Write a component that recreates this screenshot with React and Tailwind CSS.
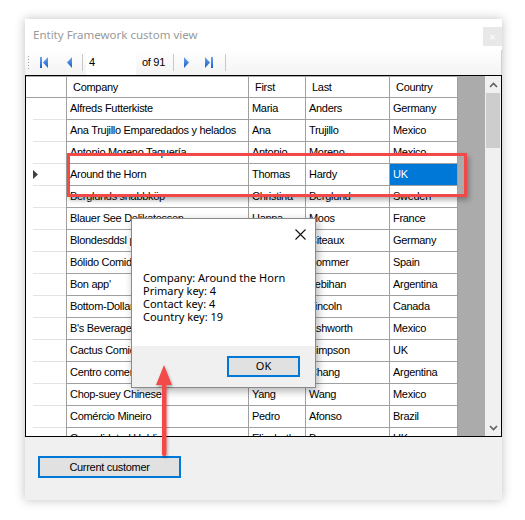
import React from "react";

const rows = [
  ["Alfreds Futterkiste", "Maria", "Anders", "Germany"],
  ["Ana Trujillo Emparedados y helados", "Ana", "Trujillo", "Mexico"],
  ["Antonio Moreno Taquería", "Antonio", "Moreno", "Mexico"],
  ["Around the Horn", "Thomas", "Hardy", "UK"],
  ["Berglunds snabbköp", "Christina", "Berglund", "Sweden"],
  ["Blauer See Delikatessen", "Hanna", "Moos", "France"],
  ["Blondesddsl père et fils", "Frédérique", "Citeaux", "Germany"],
  ["Bólido Comidas preparadas", "Martín", "Sommer", "Spain"],
  ["Bon app'", "Laurence", "Lebihan", "Argentina"],
  ["Bottom-Dollar Markets", "Elizabeth", "Lincoln", "Canada"],
  ["B's Beverages", "Victoria", "Ashworth", "Mexico"],
  ["Cactus Comidas para llevar", "Patricio", "Simpson", "UK"],
  ["Centro comercial Moctezuma", "Francisco", "Chang", "Argentina"],
  ["Chop-suey Chinese", "Yang", "Wang", "Mexico"],
  ["Comércio Mineiro", "Pedro", "Afonso", "Brazil"],
  ["Consolidated Holdings", "Elizabeth", "Brown", "UK"],
];

const current = 3;

// column widths incl. right border
const cols = ["w-[182px]", "w-[57px]", "w-[84px]", "w-[68px]"];

function NavIcon({ dir, bar }) {
  // dir: "l" or "r"
  const id = "g" + dir + (bar ? "b" : "");
  return (
    <svg width="9" height="11" viewBox="0 0 9 11">
      <defs>
        <linearGradient id={id} x1="0" y1="0" x2="0" y2="1">
          <stop offset="0" stopColor="#6aa6ee" />
          <stop offset="1" stopColor="#1a5fc8" />
        </linearGradient>
      </defs>
      {dir === "l" ? (
        <>
          {bar && <rect x="0" y="0" width="2" height="11" fill={`url(#${id})`} />}
          <polygon points={bar ? "8,0 3,5.5 8,11" : "7,0 2,5.5 7,11"} fill={`url(#${id})`} />
        </>
      ) : (
        <>
          <polygon points={bar ? "1,0 6,5.5 1,11" : "2,0 7,5.5 2,11"} fill={`url(#${id})`} />
          {bar && <rect x="7" y="0" width="2" height="11" fill={`url(#${id})`} />}
        </>
      )}
    </svg>
  );
}

function Sep() {
  return <div className="w-px h-[17px] bg-[#c8c8c8]" />;
}

export default function App() {
  const sans = { fontFamily: '"Liberation Sans", Arial, sans-serif' };
  const ui = { fontFamily: '"Noto Sans", "Open Sans", sans-serif' };

  return (
    <div className="relative w-[525px] h-[520px] bg-white overflow-hidden">
      {/* window */}
      <div className="ml-[25px] mt-[19px] w-[477px] h-[481px] flex flex-col bg-[#f0f0f0] shadow-[0_0_10px_rgba(0,0,0,0.25)]">
        {/* title bar */}
        <div className="h-[31px] bg-white flex items-start justify-between">
          <div className="pl-[8px] pt-[8px] text-[11.5px] leading-[16px] text-[#9a9a9a]" style={ui}>
            Entity Framework custom view
          </div>
          <div className="mt-[8px] w-[19px] h-[19px] bg-[#e8e8e8] flex items-center justify-center text-white text-[11px] leading-none" style={ui}>
            ×
          </div>
        </div>

        {/* toolbar */}
        <div className="h-[25px] flex items-center bg-gradient-to-b from-white to-[#f3f3f3] border-r border-[#d0d0d0] text-[11px] tracking-[-0.3px] text-black" style={sans}>
          <div className="ml-[2px] w-[3px] h-[15px] bg-[radial-gradient(circle,#a0a0a0_0.8px,transparent_1px)] bg-[length:3px_3px]" />
          <div className="ml-[10px]"><NavIcon dir="l" bar /></div>
          <div className="ml-[16px]"><NavIcon dir="l" /></div>
          <div className="ml-[8px]"><Sep /></div>
          <div className="ml-[3px] w-[50px] h-[24px] bg-white flex items-center pl-[3px]">4</div>
          <div className="ml-[6px]">of 91</div>
          <div className="ml-[8px]"><Sep /></div>
          <div className="ml-[8px]"><NavIcon dir="r" /></div>
          <div className="ml-[13px]"><NavIcon dir="r" bar /></div>
          <div className="ml-[12px]"><Sep /></div>
        </div>

        {/* grid */}
        <div className="h-[362px] border border-black flex overflow-hidden text-[11px] tracking-[-0.3px] text-black" style={sans}>
          <div className="w-[459px] bg-[#ababab] overflow-hidden flex flex-col pt-px">
            {/* header */}
            <div className="flex h-[21px] shrink-0">
              <div className="w-[41px] bg-white border-r border-b border-[#a0a0a0]" />
              {["Company", "First", "Last", "Country"].map((h, i) => (
                <div key={h} className={`${cols[i]} bg-white border-r border-b border-[#a0a0a0] pl-[6px] flex items-center`}>
                  {h}
                </div>
              ))}
            </div>
            {rows.map((r, ri) => (
              <div key={ri} className="flex h-[22px] shrink-0">
                <div className="w-[41px] bg-white border-r border-[#a0a0a0] flex items-center pl-[7px]">
                  <div className="w-full h-full border-b border-[#e3e3e3] flex items-center">
                    {ri === current && (
                      <svg width="5" height="9" viewBox="0 0 5 9">
                        <polygon points="0,0 5,4.5 0,9" fill="#404040" />
                      </svg>
                    )}
                  </div>
                </div>
                {r.map((c, ci) => {
                  const sel = ri === current && ci === 3;
                  return (
                    <div
                      key={ci}
                      className={`${cols[ci]} ${sel ? "bg-[#0078d7] text-white" : "bg-white"} border-r border-b border-[#a0a0a0] pl-[3px] flex items-center whitespace-nowrap overflow-hidden`}
                    >
                      {c}
                    </div>
                  );
                })}
              </div>
            ))}
          </div>
          {/* scrollbar */}
          <div className="w-[16px] bg-[#f0f0f0] flex flex-col">
            <div className="h-[17px] flex items-center justify-center">
              <svg width="9" height="6" viewBox="0 0 9 6">
                <polyline points="1,5 4.5,1.5 8,5" fill="none" stroke="#606060" strokeWidth="1.6" />
              </svg>
            </div>
            <div className="mx-px h-[55px] bg-[#cdcdcd]" />
            <div className="flex-1" />
            <div className="h-[17px] flex items-center justify-center">
              <svg width="9" height="6" viewBox="0 0 9 6">
                <polyline points="1,1 4.5,4.5 8,1" fill="none" stroke="#606060" strokeWidth="1.6" />
              </svg>
            </div>
          </div>
        </div>

        {/* bottom area */}
        <div className="flex-1 pl-[13px] pt-[19px]">
          <div
            className="w-[143px] h-[22px] border-2 border-[#0078d7] bg-[#e1e1e1] flex items-center justify-center text-[11px] tracking-[-0.3px] text-black"
            style={sans}
          >
            Current customer
          </div>
        </div>
      </div>

      {/* red highlight */}
      <div className="absolute left-[67px] top-[153px] w-[400px] h-[44px] border-[3px] border-[#f24848] shadow-[2px_3px_5px_rgba(0,0,0,0.3)]" />

      {/* message box */}
      <div className="absolute left-[131px] top-[218px] w-[185px] h-[170px] bg-white border border-[#8a8a8a] shadow-[2px_3px_8px_rgba(0,0,0,0.3)] flex flex-col" style={ui}>
        <div className="h-[127px] flex flex-col">
          <div className="flex justify-end pr-[9px] pt-[10px]">
            <svg width="11" height="11" viewBox="0 0 11 11">
              <path d="M0.5 0.5 L10.5 10.5 M10.5 0.5 L0.5 10.5" stroke="#111" strokeWidth="1.1" />
            </svg>
          </div>
          <div className="pl-[11px] pt-[31px] text-[11px] leading-[13px] text-black">
            <div>Company: Around the Horn</div>
            <div>Primary key: 4</div>
            <div>Contact key: 4</div>
            <div>Country key: 19</div>
          </div>
        </div>
        <div className="flex-1 bg-[#f0f0f0] flex justify-end items-start pt-[10px] pr-[15px]">
          <div className="w-[73px] h-[21px] border-2 border-[#0078d7] bg-[#e1e1e1] flex items-center justify-center text-[11px] text-black">
            OK
          </div>
        </div>
      </div>

      {/* red arrow */}
      <svg className="absolute left-[152px] top-[363px]" width="24" height="96" viewBox="0 0 24 96">
        <defs>
          <filter id="ash" x="-50%" y="-10%" width="200%" height="130%">
            <feDropShadow dx="1" dy="2" stdDeviation="1.5" floodColor="#000" floodOpacity="0.3" />
          </filter>
        </defs>
        <g filter="url(#ash)">
          <rect x="10" y="14" width="4.5" height="79" rx="2" fill="#f24848" />
          <polygon points="12,2 4,22 20,22" fill="#f24848" />
        </g>
      </svg>
    </div>
  );
}
